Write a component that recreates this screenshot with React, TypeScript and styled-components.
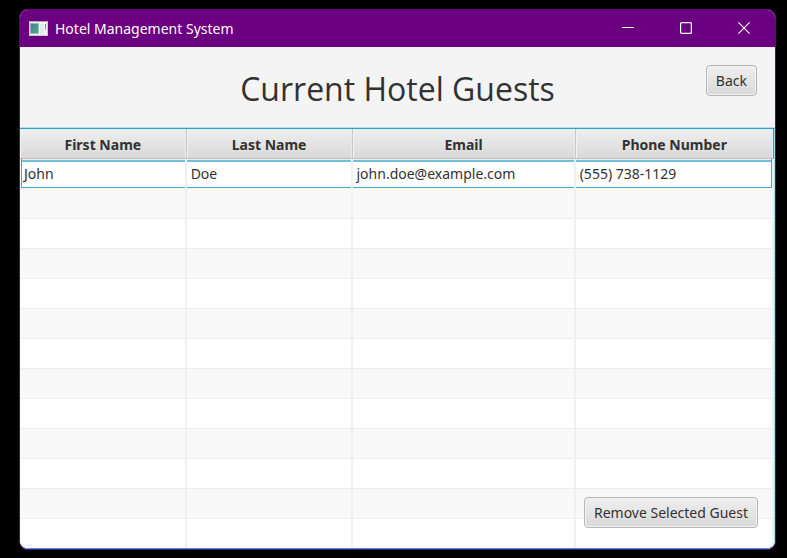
import React from "react";
import styled, { createGlobalStyle, css } from "styled-components";

const GlobalStyle = createGlobalStyle`
  * { box-sizing: border-box; }
  html, body { margin: 0; background: #000; overflow: hidden; }
  body, button, table { font-family: "Noto Sans", "Open Sans", sans-serif; }
`;

const Desktop = styled.div`
  height: 100vh;
  padding: 9px 11px 8px 19px;
  background: #000;
`;

const AppWindow = styled.div`
  display: flex;
  flex-direction: column;
  height: 100%;
  border: 1px solid #6a0080;
  border-radius: 9px;
  background: #f4f4f4;
  overflow: hidden;
`;

const TitleBar = styled.header`
  display: flex;
  align-items: center;
  flex: none;
  height: 37px;
  padding-left: 9px;
  gap: 7px;
  background: #6a0080;
  color: #fff;
`;

const WindowTitle = styled.span`
  flex: 1;
  font-size: 14px;
  line-height: 20px;
`;

const CaptionButton = styled.button`
  display: grid;
  place-items: center;
  width: 58px;
  height: 100%;
  padding: 0 0 2px;
  border: 0;
  background: transparent;
  color: #fff;
`;

const CaptionButtons = styled.div`
  display: flex;
  height: 100%;
  padding-right: 2px;
`;

const PageHeader = styled.div`
  display: grid;
  grid-template-columns: 1fr auto 1fr;
  align-items: start;
  flex: none;
  height: 81px;
  padding: 18px 18px 0;
`;

const Heading = styled.h1`
  grid-column: 2;
  margin: 0;
  color: #323232;
  font-family: "Open Sans", "Noto Sans", sans-serif;
  font-size: 32px;
  font-weight: 400;
  line-height: 48px;
`;

const Button = styled.button`
  height: 31px;
  padding: 0 9px;
  border: 1px solid #b5b5b5;
  border-radius: 4px;
  background: linear-gradient(#efefef, #d9d9d9);
  box-shadow: inset 0 0 0 1px #f3f3f3;
  color: #323232;
  font-size: 14px;
  line-height: 20px;
  white-space: nowrap;
`;

const BackButton = styled(Button)`
  justify-self: end;
`;

const TableArea = styled.main`
  position: relative;
  flex: 1;
  min-height: 0;
  border: solid #1fa5cf;
  border-width: 1px 0;
  border-right: 1px solid #a8deee;
  box-shadow: 0 -1px #b5dfec;
  background: #fff;
  border-radius: 0 0 8px 8px;
  overflow: hidden;
`;

const Table = styled.table`
  width: 100%;
  table-layout: fixed;
  border-collapse: separate;
  border-spacing: 0;
  color: #323232;
  font-size: 14px;
  line-height: 20px;
`;

const Column = styled.col<{ $share: number }>`
  width: ${({ $share }) => $share}%;
`;

const HeaderCell = styled.th`
  height: 30px;
  padding: 2px 0 0;
  border-right: 1px solid #c8c8c8;
  border-bottom: 1px solid #c0c0c0;
  background: linear-gradient(#efefef, #d9d9d9);
  box-shadow: inset 1px 0 #f1f1f1, inset -1px 0 #e9e9e9;
  font-weight: 700;
  text-align: center;

  &:last-child {
    border-right: 1px solid #1fa5cf;
  }
`;

const Cell = styled.td`
  height: 30px;
  padding: 0 4px;
  border-right: 2px solid #f0f0f0;
  border-bottom: 1px solid #ededed;
  background-clip: padding-box;
`;

const Row = styled.tr<{ $focused: boolean }>`
  background: #fff;

  &:nth-child(even) {
    background: #f9f9f9;
  }

  ${({ $focused }) =>
    $focused &&
    css`
      ${Cell} {
        border-bottom-color: #f9f9f9;
        background: linear-gradient(#ededed 0 1px, #70c0dc 1px 3px, #fff 3px);
        box-shadow: inset 0 -1px #38abd0;
      }

      ${Cell}:first-child {
        border-left: 1px solid #fff;
        padding-left: 3px;
        box-shadow: inset 1px -1px #38abd0;
      }

      ${Cell}:last-child {
        box-shadow: inset -1px -1px #38abd0;
      }
    `}
`;

const TableActions = styled.div`
  position: absolute;
  right: 16px;
  bottom: 20px;
`;

const columns = [
  { label: "First Name", share: 22.1 },
  { label: "Last Name", share: 22 },
  { label: "Email", share: 29.6 },
  { label: "Phone Number", share: 26.3 },
];

const guests = [["John", "Doe", "john.doe@example.com", "(555) 738-1129"]];
const emptyRows = Array.from({ length: 12 }, () => ["", "", "", ""]);

function AppIcon() {
  return (
    <svg width="19" height="16" viewBox="0 0 19 16" aria-hidden="true">
      <defs>
        <linearGradient id="pane" x1="0" y1="0" x2="1" y2="1">
          <stop offset="0" stopColor="#4278a8" />
          <stop offset="1" stopColor="#55b478" />
        </linearGradient>
        <linearGradient id="side" x1="0" y1="0" x2="0" y2="1">
          <stop offset="0" stopColor="#3f7fa0" />
          <stop offset="1" stopColor="#8fcaa5" />
        </linearGradient>
      </defs>
      <rect x="0.5" y="0.5" width="18" height="14" fill="#f1f3f4" stroke="#c9c9cc" />
      <path d="M1 0.5h17" stroke="#a9a6ae" />
      <rect x="1.5" y="2.5" width="8" height="10" fill="url(#pane)" stroke="#8fb0bd" strokeWidth="0.6" />
      <path d="M11 3h4v10h-4z" fill="#e3e8ec" />
      <rect x="16" y="3" width="1" height="6" fill="url(#side)" />
    </svg>
  );
}

export default function App() {
  return (
    <>
      <GlobalStyle />
      <Desktop>
        <AppWindow>
          <TitleBar>
            <AppIcon />
            <WindowTitle>Hotel Management System</WindowTitle>
            <CaptionButtons>
              <CaptionButton aria-label="Minimize">
                <svg width="12" height="12" viewBox="0 0 12 12">
                  <path d="M0 5.5h12" stroke="currentColor" />
                </svg>
              </CaptionButton>
              <CaptionButton aria-label="Maximize">
                <svg width="12" height="12" viewBox="0 0 12 12">
                  <rect x="0.6" y="0.6" width="10.8" height="10.8" rx="1" fill="none" stroke="currentColor" strokeWidth="1.2" />
                </svg>
              </CaptionButton>
              <CaptionButton aria-label="Close">
                <svg width="12" height="12" viewBox="0 0 12 12">
                  <path d="M0.3 0.3l11.4 11.4M11.7 0.3L0.3 11.7" stroke="currentColor" strokeWidth="1.1" />
                </svg>
              </CaptionButton>
            </CaptionButtons>
          </TitleBar>
          <PageHeader>
            <Heading>Current Hotel Guests</Heading>
            <BackButton>Back</BackButton>
          </PageHeader>
          <TableArea>
            <Table>
              <colgroup>
                {columns.map((column) => (
                  <Column key={column.label} $share={column.share} />
                ))}
              </colgroup>
              <thead>
                <tr>
                  {columns.map((column) => (
                    <HeaderCell key={column.label} scope="col">
                      {column.label}
                    </HeaderCell>
                  ))}
                </tr>
              </thead>
              <tbody>
                {[...guests, ...emptyRows].map((row, rowIndex) => (
                  <Row key={rowIndex} $focused={rowIndex === 0}>
                    {row.map((value, cellIndex) => (
                      <Cell key={cellIndex}>{value}</Cell>
                    ))}
                  </Row>
                ))}
              </tbody>
            </Table>
            <TableActions>
              <Button>Remove Selected Guest</Button>
            </TableActions>
          </TableArea>
        </AppWindow>
      </Desktop>
    </>
  );
}
